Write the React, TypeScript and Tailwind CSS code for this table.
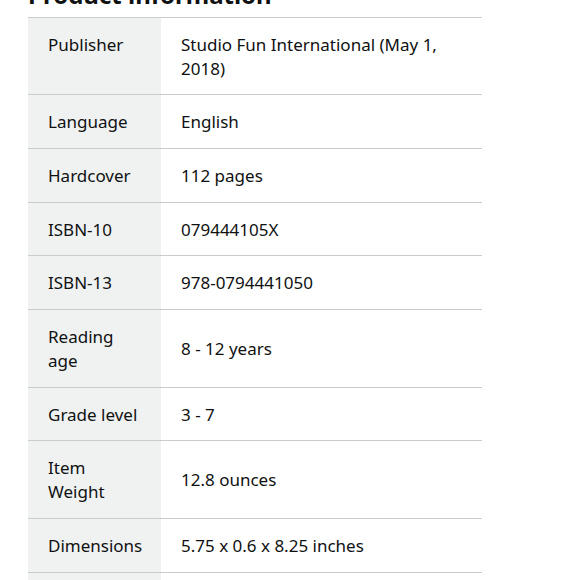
const rows: [string, string][] = [
  ['Publisher', 'Studio Fun International (May 1, 2018)'],
  ['Language', 'English'],
  ['Hardcover', '112 pages'],
  ['ISBN-10', '079444105X'],
  ['ISBN-13', '978-0794441050'],
  ['Reading age', '8 - 12 years'],
  ['Grade level', '3 - 7'],
  ['Item Weight', '12.8 ounces'],
  ['Dimensions', '5.75 x 0.6 x 8.25 inches'],
  ['Best Sellers Rank', '#1 in Books'],
];

export default function App() {
  return (
    <div className="h-[580px] w-[580px] overflow-hidden bg-white text-[#0f1111]" style={{ fontFamily: '"Noto Sans", "Open Sans", sans-serif' }}>
      <h2 className="ml-7 -mt-[20px] mb-[6.5px] text-[24px] font-bold leading-[30px]">Product information</h2>
      <table className="ml-7 w-[454px] table-fixed border-collapse text-[17px] leading-[24px]">
        <tbody>
          {rows.map(([label, value]) => (
            <tr key={label} className="border-t border-[#c9cccc]">
              <th className="w-[133px] bg-[#f0f2f2] px-5 pt-[15px] pb-[13.7px] text-left align-top font-normal">{label}</th>
              <td className="px-5 pt-[15px] pb-[13.7px] align-middle">{value}</td>
            </tr>
          ))}
        </tbody>
      </table>
    </div>
  );
}
